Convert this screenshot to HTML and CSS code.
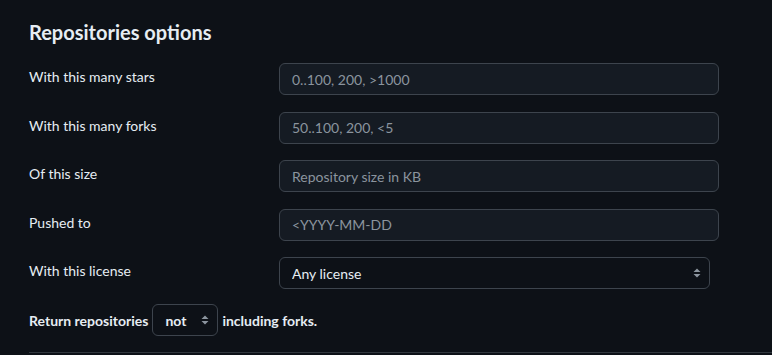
FILE: index.html
```html
<!DOCTYPE html>
<html>
<head>
    <title>Advanced search</title>
    <link rel="stylesheet" href="styles.css">
</head>
<body>
    <div class="container">
        <h3>Repositories options</h3>
        <div class="fields">
            <label for="stars">With this many stars</label>
            <input id="stars" type="text" placeholder="0..100, 200, >1000">

            <label for="forks">With this many forks</label>
            <input id="forks" type="text" placeholder="50..100, 200, <5">

            <label for="size">Of this size</label>
            <input id="size" type="text" placeholder="Repository size in KB">

            <label for="pushed">Pushed to</label>
            <input id="pushed" type="text" placeholder="<YYYY-MM-DD">

            <label for="license">With this license</label>
            <div class="select-wrap wide">
                <select id="license">
                    <option>Any license</option>
                </select>
                <svg class="caret" width="8" height="12" viewBox="0 0 8 12"><path d="M4 1.5L7.5 5h-7zM4 10.5L0.5 7h7z" fill="#8b949e"/></svg>
            </div>
        </div>
        <p class="forks">
            Return repositories
            <span class="select-wrap small">
                <select id="forks-mode">
                    <option>not</option>
                </select>
                <svg class="caret" width="8" height="12" viewBox="0 0 8 12"><path d="M4 1.5L7.5 5h-7zM4 10.5L0.5 7h7z" fill="#8b949e"/></svg>
            </span>
            including forks.
        </p>
        <hr>
    </div>
</body>
</html>
```

FILE: styles.css
```css
body {
    margin: 0;
    background-color: #0d1117;
    color: #e6edf3;
    font-family: 'Lato', 'Noto Sans', sans-serif;
    font-size: 14px;
    overflow: hidden;
}
.container {
    padding: 0 0 0 29px;
}
h3 {
    font-size: 20px;
    font-weight: 700;
    margin: 0 0 19px;
    padding-top: 19px;
    height: 44px;
    box-sizing: border-box;
    line-height: 26px;
}
.fields {
    display: grid;
    grid-template-columns: 250px 440px;
    row-gap: 16.5px;
    align-items: center;
}
.fields label {
    line-height: 20px;
    padding-bottom: 4px;
}
input {
    height: 32px;
    box-sizing: border-box;
    padding: 0 12px;
    background-color: #151b23;
    border: 1px solid #3d444d;
    border-radius: 6px;
    color: #e6edf3;
    font-family: inherit;
    font-size: 14px;
    outline: none;
}
input::placeholder {
    color: #8b949e;
}
.select-wrap {
    position: relative;
    display: inline-block;
}
.select-wrap.wide {
    width: 431px;
}
select {
    appearance: none;
    -webkit-appearance: none;
    width: 100%;
    height: 32px;
    box-sizing: border-box;
    padding: 0 12px;
    background-color: #0d1117;
    border: 1px solid #3d444d;
    border-radius: 6px;
    color: #e6edf3;
    font-family: inherit;
    font-size: 14px;
}
.select-wrap.small {
    width: 66px;
    vertical-align: middle;
}
.select-wrap.small select {
    font-weight: 700;
}
.caret {
    position: absolute;
    right: 9px;
    top: 10px;
    pointer-events: none;
}
.forks {
    font-weight: 700;
    margin: 15px 0 0;
    height: 32px;
    display: flex;
    align-items: center;
    gap: 4px;
}
hr {
    margin: 16px 0 0;
    border: 0;
    border-top: 1px solid #30363d;
}
```
